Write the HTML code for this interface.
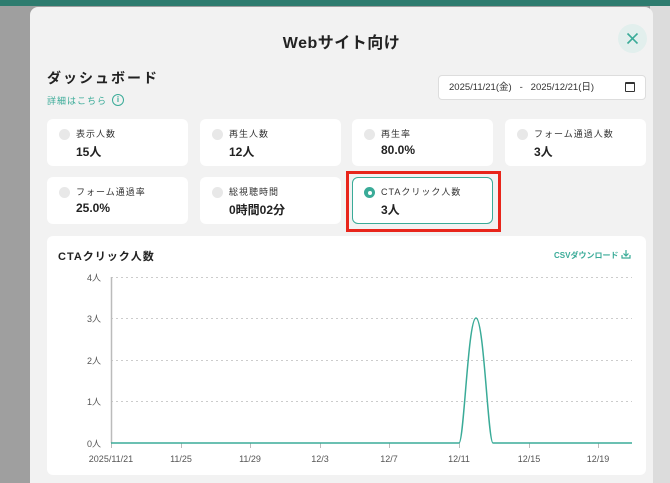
<!DOCTYPE html>
<html><head><meta charset="utf-8"><style>
*{box-sizing:border-box;margin:0;padding:0}
html,body{width:670px;height:483px;overflow:hidden}
body{background:#9f9f9f;font-family:"Liberation Sans","Noto Sans CJK JP",sans-serif;position:relative;color:#222}
.top{position:absolute;left:0;top:0;width:670px;height:6px;background:#2e7c6f}
.rgt{position:absolute;left:650px;top:6px;width:20px;height:477px;background:#dcdcdc}
.modal{position:absolute;left:30px;top:7px;width:623px;height:476px;background:#f2f2f2;border-radius:8px 8px 0 0}
.abs{position:absolute}
.card{position:absolute;background:#fff;border-radius:6px;height:47px;width:141px}
.card .dot{position:absolute;left:12px;top:10px;width:11px;height:11px;border-radius:50%;background:#e8e8e8}
.card .lb{position:absolute;left:29px;top:8px;font-size:9px;color:#333;letter-spacing:1px}
.card .v{position:absolute;left:29px;top:24px;font-size:12px;font-weight:bold;color:#222}
</style></head><body>
<div class="top"></div>
<div class="rgt"></div>
<div class="modal">
 <div class="abs" style="left:0;width:623px;top:22px;text-align:center;font-size:16px;font-weight:bold;color:#222;letter-spacing:0.5px">Webサイト向け</div>
 <div class="abs" style="left:588px;top:17px;width:29px;height:29px;border-radius:50%;background:#e2efed"><svg width="29" height="29"><path d="M9.5 9.5l10 10M19.5 9.5l-10 10" stroke="#3aab98" stroke-width="1.6"/></svg></div>
 <div class="abs" style="left:17px;top:61px;font-size:14px;font-weight:bold;letter-spacing:2px">ダッシュボード</div>
 <div class="abs" style="left:17px;top:87px;font-size:9px;color:#3aab98;letter-spacing:1px">詳細はこちら</div>
 <div class="abs" style="left:82px;top:87px;width:12px;height:12px;border:1.3px solid #3aab98;border-radius:50%;font-size:8px;color:#3aab98;text-align:center;line-height:10px;font-weight:bold">i</div>
 <div class="abs" style="left:408px;top:68px;width:208px;height:25px;background:#fff;border:1px solid #ddd;border-radius:4px;font-size:9.5px;color:#333;line-height:23px;padding-left:10px;white-space:pre">2025/11/21(金)   -   2025/12/21(日)</div>
 <div class="abs" style="left:595px;top:75px;width:10px;height:10px;border:1.3px solid #333;border-top-width:2.5px;border-radius:1px"></div>
</div>
<div class="card" style="left:47px;top:119px"><div class="dot"></div><div class="lb">表示人数</div><div class="v">15人</div></div>
<div class="card" style="left:200px;top:119px"><div class="dot"></div><div class="lb">再生人数</div><div class="v">12人</div></div>
<div class="card" style="left:352px;top:119px"><div class="dot"></div><div class="lb">再生率</div><div class="v">80.0%</div></div>
<div class="card" style="left:505px;top:119px"><div class="dot"></div><div class="lb">フォーム通過人数</div><div class="v">3人</div></div>
<div class="card" style="left:47px;top:177px"><div class="dot"></div><div class="lb">フォーム通過率</div><div class="v">25.0%</div></div>
<div class="card" style="left:200px;top:177px"><div class="dot"></div><div class="lb">総視聴時間</div><div class="v">0時間02分</div></div>
<div class="abs" style="left:346px;top:171px;width:155px;height:61px;border:3px solid #e8251b"></div>
<div class="card" style="left:352px;top:177px;border:1.5px solid #3aab98"><div class="dot" style="background:#3aab98;left:11px;top:9px"><div style="position:absolute;left:3.5px;top:3.5px;width:4px;height:4px;border-radius:50%;background:#fff"></div></div><div class="lb" style="left:28px;top:7px">CTAクリック人数</div><div class="v" style="left:28px;top:23px">3人</div></div>
<div class="abs" style="left:47px;top:236px;width:599px;height:239px;background:#fff;border-radius:6px"></div>
<div class="abs" style="left:58px;top:248px;font-size:11px;font-weight:bold;letter-spacing:1px">CTAクリック人数</div>
<div class="abs" style="left:554px;top:250px;font-size:8px;font-weight:bold;color:#3aab98">CSVダウンロード</div>
<svg class="abs" style="left:0;top:0" width="670" height="483">
 <path d="M626 250v6M623.5 253.5l2.5 2.5 2.5-2.5M622 255v3h8v-3" stroke="#3aab98" stroke-width="1.2" fill="none"/>
 <g stroke="#ccc" stroke-dasharray="2 3" stroke-width="1"><path d="M111 277.5H632M111 318.5H632M111 360.5H632M111 401.5H632"/></g>
 <path d="M111.5 277V443" stroke="#bbb" stroke-width="1.5"/>
 <g stroke="#bbb"><path d="M111.5 443v5M181.5 443v5M250.5 443v5M320.5 443v5M389.5 443v5M459.5 443v5M529.5 443v5M598.5 443v5"/></g>
 <path d="M111 443H459C464 443 468 318 476 318C484 318 488 443 493 443H632" stroke="#3aab98" stroke-width="1.5" fill="none"/>
 <g font-size="9" fill="#555" text-anchor="end" font-family="Liberation Sans,Noto Sans CJK JP,sans-serif"><text x="101" y="281">4人</text><text x="101" y="322">3人</text><text x="101" y="364">2人</text><text x="101" y="405">1人</text><text x="101" y="447">0人</text></g>
 <g font-size="9" fill="#555" text-anchor="middle" font-family="Liberation Sans,sans-serif"><text x="111" y="462">2025/11/21</text><text x="181" y="462">11/25</text><text x="250" y="462">11/29</text><text x="320" y="462">12/3</text><text x="389" y="462">12/7</text><text x="459" y="462">12/11</text><text x="529" y="462">12/15</text><text x="598" y="462">12/19</text></g>
</svg>
</body></html>
